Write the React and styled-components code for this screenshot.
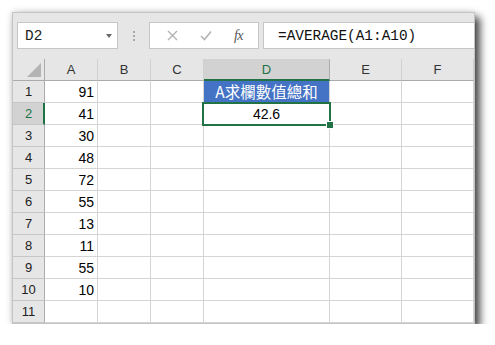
import React from "react";
import styled, { createGlobalStyle } from "styled-components";

const Global = createGlobalStyle`
  html, body { margin: 0; padding: 0; background: #ffffff; }
  body { font-family: "Liberation Sans", Arial, sans-serif; }
`;

const Page = styled.div`
  padding: 12px 0 0 12px;
`;

const Window = styled.div`
  width: 463px;
  height: 312px;
  box-sizing: border-box;
  border: 1px solid #c4c4c4;
  background: #e6e6e6;
  box-shadow: 5px 5px 8px rgba(0, 0, 0, 0.72), -1px -1px 6px rgba(0, 0, 0, 0.12);
  display: flex;
  flex-direction: column;
  overflow: hidden;
`;

const Toolbar = styled.div`
  height: 46px;
  flex: none;
  box-sizing: border-box;
  padding: 9px 0 0 4px;
  display: flex;
  align-items: flex-start;
  background: #e6e6e6;
`;

const Box = styled.div`
  height: 27px;
  box-sizing: border-box;
  background: #ffffff;
  border: 1px solid #c6c6c6;
  display: flex;
  align-items: center;
  position: relative;
`;

const NameBox = styled(Box)`
  width: 101px;
  padding-left: 7px;
  font-family: "Liberation Mono", "Courier New", monospace;
  font-size: 14.4px;
  color: #222;
`;

const DropArrow = styled.span`
  position: absolute;
  right: 5px;
  top: 11px;
  width: 0;
  height: 0;
  border-left: 3.5px solid transparent;
  border-right: 3.5px solid transparent;
  border-top: 4px solid #6a6a6a;
`;

const Grip = styled.div`
  width: 31px;
  height: 27px;
  display: flex;
  flex-direction: column;
  align-items: center;
  justify-content: center;
  gap: 2px;
`;

const Dot = styled.span`
  width: 2px;
  height: 2px;
  background: #a8a8a8;
`;

const FuncBox = styled(Box)`
  width: 110px;
  justify-content: space-around;
  padding: 0 4px 0 6px;
`;

const Fx = styled.span`
  font-family: "Liberation Serif", "Times New Roman", serif;
  font-style: italic;
  font-size: 14px;
  color: #555;
  letter-spacing: -0.5px;
`;

const FormulaBox = styled(Box)`
  flex: 1;
  margin-left: 4px;
  border-right: none;
  padding-left: 14px;
  font-family: "Liberation Mono", "Courier New", monospace;
  font-size: 14.4px;
  color: #111;
`;

const Sheet = styled.div`
  display: grid;
  grid-template-columns: 32px 53px 53px 53px 126px 72px 72px;
  grid-auto-rows: 22px;
  background: #ffffff;
`;

const HeaderBase = styled.div`
  box-sizing: border-box;
  background: #e6e6e6;
  display: flex;
  align-items: center;
  justify-content: center;
  font-family: "Liberation Sans", Arial, sans-serif;
  font-size: 13px;
  color: #333;
`;

const Corner = styled(HeaderBase)`
  position: relative;
  border-right: 1px solid #ababab;
  border-bottom: 1px solid #ababab;
`;

const CornerTri = styled.span`
  position: absolute;
  right: 3px;
  bottom: 3px;
  width: 0;
  height: 0;
  border-left: 14px solid transparent;
  border-bottom: 14px solid #b4b4b4;
`;

const ColHeader = styled(HeaderBase)`
  border-right: 1px solid ${(p) => (p.$active ? "#ababab" : "#d0d0d0")};
  border-bottom: ${(p) => (p.$active ? "2px solid #217346" : "1px solid #ababab")};
  background: ${(p) => (p.$active ? "#d2d2d2" : "#e6e6e6")};
  color: ${(p) => (p.$active ? "#217346" : "#333")};
  padding-top: ${(p) => (p.$active ? "1px" : "0")};
`;

const RowHeader = styled(HeaderBase)`
  border-right: ${(p) => (p.$active ? "2px solid #217346" : "1px solid #ababab")};
  border-bottom: 1px solid #c6c6c6;
  background: ${(p) => (p.$active ? "#d2d2d2" : "#e6e6e6")};
  color: ${(p) => (p.$active ? "#217346" : "#222")};
  padding-left: ${(p) => (p.$active ? "1px" : "0")};
`;

const Cell = styled.div`
  position: relative;
  box-sizing: border-box;
  border-right: 1px solid #d4d4d4;
  border-bottom: 1px solid #d4d4d4;
  display: flex;
  align-items: center;
  justify-content: ${(p) => (p.$align === "right" ? "flex-end" : "center")};
  padding: 0 3px;
  font-family: "Liberation Sans", "Noto Sans CJK TC", sans-serif;
  font-size: 14px;
  color: #000;
  background: ${(p) => (p.$fill ? "#4472c4" : "#ffffff")};
  white-space: nowrap;
`;

const TitleText = styled.span`
  color: #ffffff;
  font-family: "Noto Sans CJK TC", "Noto Sans", sans-serif;
  font-size: 15.5px;
  line-height: 1;
`;

const Selection = styled.span`
  position: absolute;
  left: -2px;
  top: -1px;
  right: -2px;
  bottom: -2px;
  border: 2px solid #217346;
  pointer-events: none;
  z-index: 2;
`;

const FillHandle = styled.span`
  position: absolute;
  right: -5px;
  bottom: -5px;
  width: 6px;
  height: 6px;
  background: #217346;
  border: 1px solid #ffffff;
`;

const cols = ["A", "B", "C", "D", "E", "F"];
const values = [91, 41, 30, 48, 72, 55, 13, 11, 55, 10, null];

export default function App() {
  return (
    <>
      <Global />
      <Page>
        <Window>
          <Toolbar>
            <NameBox>
              D2
              <DropArrow />
            </NameBox>
            <Grip>
              <Dot />
              <Dot />
              <Dot />
            </Grip>
            <FuncBox>
              <svg width="11" height="11" viewBox="0 0 11 11">
                <path d="M1 1L10 10M10 1L1 10" stroke="#b3b3b3" strokeWidth="1.4" fill="none" />
              </svg>
              <svg width="12" height="11" viewBox="0 0 12 11">
                <path d="M1 6L4.5 9.5L11 1.5" stroke="#b3b3b3" strokeWidth="1.6" fill="none" />
              </svg>
              <Fx>fx</Fx>
            </FuncBox>
            <FormulaBox>=AVERAGE(A1:A10)</FormulaBox>
          </Toolbar>
          <Sheet>
            <Corner>
              <CornerTri />
            </Corner>
            {cols.map((c) => (
              <ColHeader key={c} $active={c === "D"}>
                {c}
              </ColHeader>
            ))}
            {values.map((v, i) => {
              const r = i + 1;
              return (
                <React.Fragment key={r}>
                  <RowHeader $active={r === 2}>{r}</RowHeader>
                  <Cell $align="right">{v}</Cell>
                  <Cell />
                  <Cell />
                  {r === 1 ? (
                    <Cell $fill>
                      <TitleText>A求欄數值總和</TitleText>
                    </Cell>
                  ) : r === 2 ? (
                    <Cell>
                      42.6
                      <Selection>
                        <FillHandle />
                      </Selection>
                    </Cell>
                  ) : (
                    <Cell />
                  )}
                  <Cell />
                  <Cell />
                </React.Fragment>
              );
            })}
          </Sheet>
        </Window>
      </Page>
    </>
  );
}
